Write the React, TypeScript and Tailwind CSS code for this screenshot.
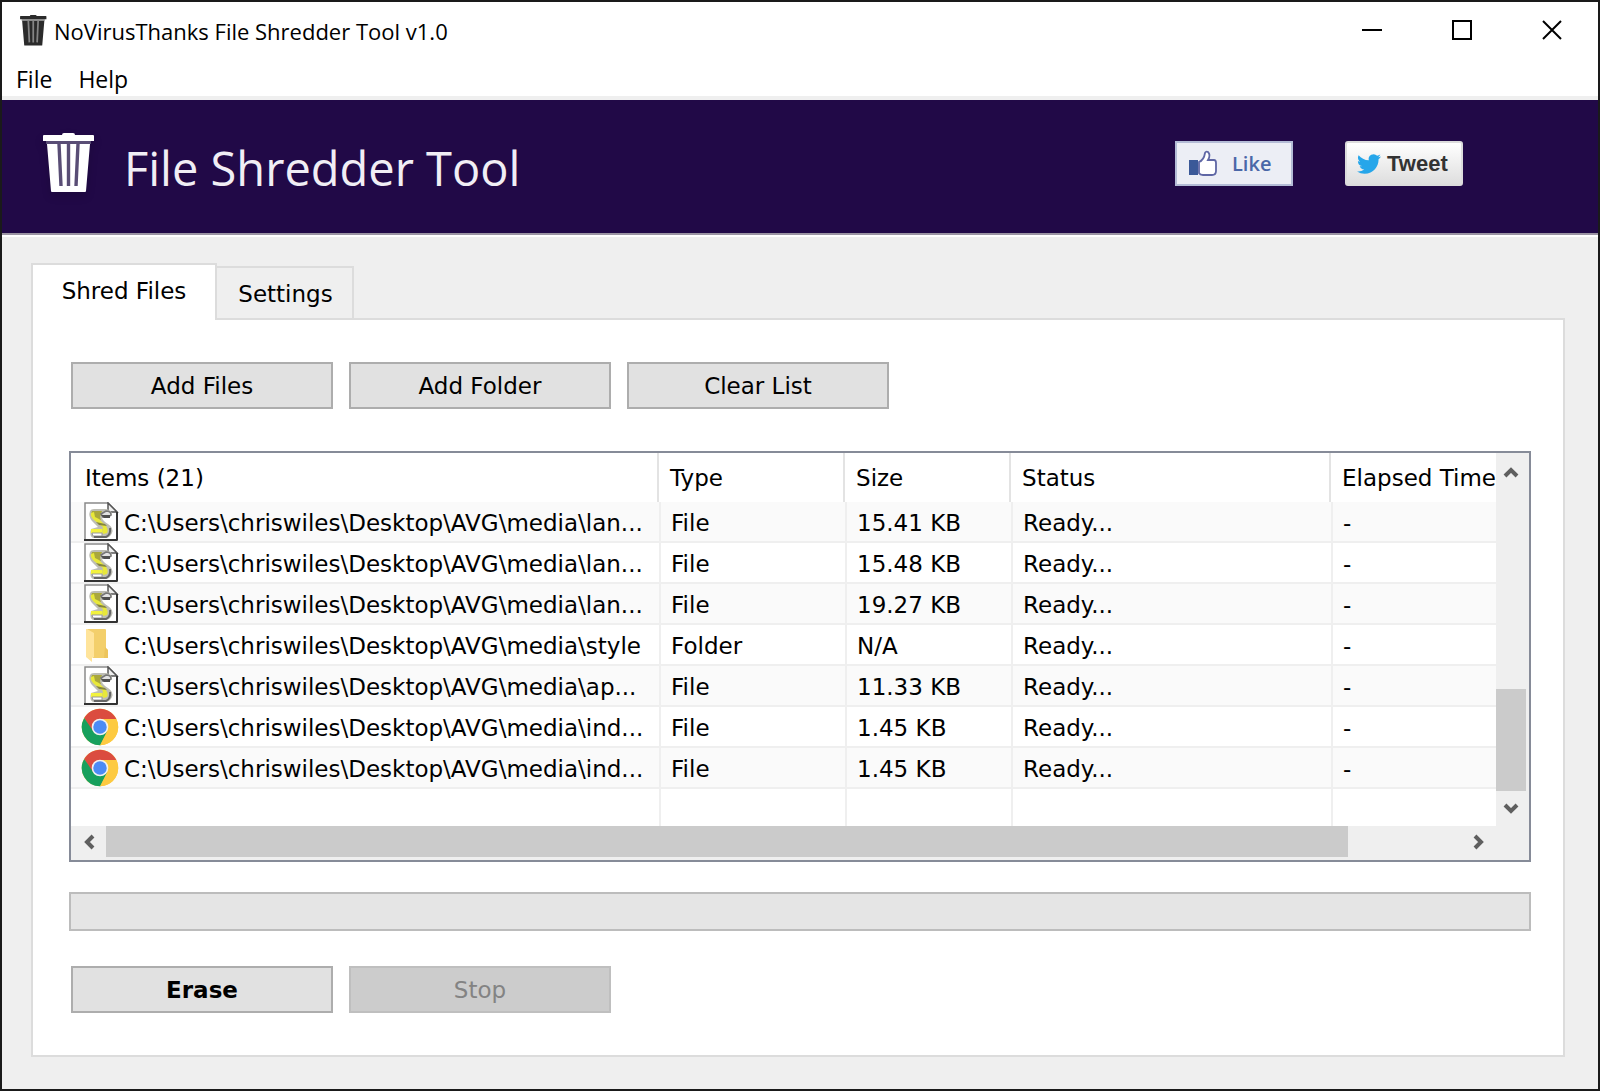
import { useState } from 'react';

const columns = ['Type', 'Size', 'Status', 'Elapsed Time'];

const items = [
  { icon: 'script', path: 'C:\\Users\\chriswiles\\Desktop\\AVG\\media\\lan...', type: 'File', size: '15.41 KB' },
  { icon: 'script', path: 'C:\\Users\\chriswiles\\Desktop\\AVG\\media\\lan...', type: 'File', size: '15.48 KB' },
  { icon: 'script', path: 'C:\\Users\\chriswiles\\Desktop\\AVG\\media\\lan...', type: 'File', size: '19.27 KB' },
  { icon: 'folder', path: 'C:\\Users\\chriswiles\\Desktop\\AVG\\media\\style', type: 'Folder', size: 'N/A' },
  { icon: 'script', path: 'C:\\Users\\chriswiles\\Desktop\\AVG\\media\\ap...', type: 'File', size: '11.33 KB' },
  { icon: 'chrome', path: 'C:\\Users\\chriswiles\\Desktop\\AVG\\media\\ind...', type: 'File', size: '1.45 KB' },
  { icon: 'chrome', path: 'C:\\Users\\chriswiles\\Desktop\\AVG\\media\\ind...', type: 'File', size: '1.45 KB' },
];

function TrashIcon({ className, fill, gap }: { className: string; fill: string; gap: string }) {
  return (
    <svg className={className} viewBox="0 0 52 60" aria-hidden="true">
      <path fill={fill} d="M19 2q0-2 2-2h9q2 0 2 2h18q1 0 1 1v5H0V3q0-1 1-1z" />
      <path fill={gap} d="M3 8h45v3H3z" />
      <path fill={fill} d="M4 11h43l-4 47q0 1-1 1H9q-1 0-1-1z" />
      <path
        fill="none"
        stroke={gap}
        strokeWidth="3.4"
        d="M16 11l2 42M25.5 11v42M35 11l-2 42"
      />
    </svg>
  );
}

function ScriptIcon() {
  return (
    <svg className="h-[39px] w-[38px]" viewBox="0 0 38 39" aria-hidden="true">
      <path fill="#fff" stroke="#8a8a8a" strokeWidth="1.5" d="M4 1h23l9 9v28H4z" />
      <path fill="#eee" stroke="#555" strokeWidth="1.5" d="M27 1v9h9z" />
      <path fill="none" stroke="#333" strokeWidth="2" d="M3 38h33.5M36 10v28" />
      {/* parchment roll */}
      <path fill="#bdbdb4" d="M9 9q1-2 4-2h12q6 1 6 6l-5 3h-5q1 3 6 6 6 4 4 9-2 5-7 5H12q-4-2-2-9l7-2-6-6q-4-5-2-10z" />
      <path fill="#a9a73c" d="M11 9h10l-2 6 1 3-7-1q-4-4-2-8z" />
      <path fill="#e8e83a" d="M10 11l3-1 1 5 4 2 6 6q4 4 2 8l-4 1-1-3 1-4-9-7q-4-4-3-7z" />
      <path fill="#e2e2e2" stroke="#777" strokeWidth="1.5" d="M20 12l5-3q5 0 5 4l-3 2h-5z" />
      <path fill="#4f4f4f" d="M20 13h9v3h-6z" />
      <path fill="#85853f" d="M15 20l9 2 2 2-8-1z" />
      <path fill="#f2f23e" d="M10 27h11v4H10z" />
      <path fill="#fff" stroke="#999" d="M11 31h10v3H12z" />
      <path fill="none" stroke="#666" strokeWidth="2" d="M13 35h12q5-2 4-9" />
    </svg>
  );
}

function FolderIcon() {
  return (
    <svg className="h-[39px] w-[38px]" viewBox="0 0 38 39" aria-hidden="true">
      <path fill="#f3cf6b" d="M6 4h18q1 0 1 1v18l2 2v8H12z" />
      <path fill="#e9be52" d="M24 22l3 3v8h-4z" opacity="0.6" />
      <path fill="#ffe49b" d="M5 4h1l7 4v24l-2 1v4l-6-5z" />
    </svg>
  );
}

function ChromeIcon() {
  return (
    <svg className="h-[38px] w-[38px]" viewBox="0 0 48 48" aria-hidden="true">
      <circle cx="24" cy="24" r="23" fill="#fdca41" />
      <path fill="#db4c3f" d="M4.1 12.5A23 23 0 0 1 43.9 12.5L44.7 14H24L14 30z" />
      <path fill="#17a05d" d="M4.1 12.5A23 23 0 0 0 24.5 47L33.5 29.5 24 34 15.3 29z" />
      <path fill="#fdca41" d="M44.7 14A23 23 0 0 1 24 47L33 29.5Q36 22 30 14z" />
      <circle cx="24" cy="24" r="10.5" fill="#f1f1f1" />
      <circle cx="24" cy="24" r="8.5" fill="#4c8bf5" />
    </svg>
  );
}

function ItemIcon({ name }: { name: string }) {
  if (name === 'folder') return <FolderIcon />;
  if (name === 'chrome') return <ChromeIcon />;
  return <ScriptIcon />;
}

function Chevron({ d }: { d: string }) {
  return (
    <svg className="h-4 w-4" viewBox="0 0 16 16" aria-hidden="true">
      <path d={d} fill="none" stroke="#5f5f5f" strokeWidth="4" />
    </svg>
  );
}

export default function App() {
  const [tab, setTab] = useState('shred');
  const button = 'h-[47px] w-[262px] border-2 border-[#adadad] bg-[#e1e1e1] text-black';
  const cell = 'border-b-2 border-l-2 border-[#efefef] pb-0 pl-[10px] pt-[2px]';

  return (
    <div className="flex min-h-screen flex-col border-2 border-[#1a1a1a] bg-[#efefef] font-['DejaVu_Sans',Verdana,sans-serif] text-[23px] leading-[28px] text-black">
      {/* Title bar */}
      <header className="bg-white font-['Open_Sans','Noto_Sans',sans-serif]">
        <div className="flex h-[56px] items-center justify-between">
          <div className="flex items-center gap-[7px] pl-[18px]">
            <TrashIcon className="h-[31px] w-[27px]" fill="#2b2b2b" gap="#858585" />
            <h1 className="pt-[2px] text-[22px]">NoVirusThanks File Shredder Tool v1.0</h1>
          </div>
          <div className="flex pr-px">
            <button aria-label="Minimize" className="flex h-[54px] w-[90px] items-center justify-center">
              <svg className="h-5 w-5" viewBox="0 0 20 20"><path d="M0 10h20" stroke="#000" strokeWidth="2" /></svg>
            </button>
            <button aria-label="Maximize" className="flex h-[54px] w-[90px] items-center justify-center">
              <svg className="h-5 w-5" viewBox="0 0 20 20"><path d="M1 1h18v18H1z" fill="none" stroke="#000" strokeWidth="2" /></svg>
            </button>
            <button aria-label="Close" className="flex h-[54px] w-[90px] items-center justify-center">
              <svg className="h-5 w-5" viewBox="0 0 20 20"><path d="M1 1l18 18M19 1L1 19" stroke="#000" strokeWidth="2" /></svg>
            </button>
          </div>
        </div>
        <nav className="flex h-[38px] items-end gap-[26px] pb-[3px] pl-[14px]">
          <button>File</button>
          <button>Help</button>
        </nav>
      </header>

      {/* Banner */}
      <section className="flex h-[137px] items-start justify-between border-t-4 border-[#efefef] bg-[#210947]">
        <div className="flex items-start pl-[41px] pt-[33px] text-white">
          <TrashIcon className="h-[60px] w-[52px] drop-shadow-lg" fill="#ffffff" gap="#594d75" />
          <h2 className="pl-[29px] pt-[7px] font-['Open_Sans',sans-serif] text-[47px] leading-[56px] text-[#f1eef5]">File Shredder Tool</h2>
        </div>
        <div className="flex gap-[52px] pr-[135px] pt-[41px]">
          <a href="#like" className="flex h-[45px] w-[118px] items-center gap-[15px] border-2 border-[#b4bcd6] bg-[#eceef5] pl-3 font-['Open_Sans',sans-serif] text-[20px] font-semibold text-[#4a67a8]">
            <svg className="h-[27px] w-[28px]" viewBox="0 0 28 27" aria-hidden="true">
              <path fill="#3b5998" d="M0 10h9v15H0z" />
              <path fill="#fff" stroke="#5f67a5" strokeWidth="1.8" d="M10 12q5-2 6-9 1-2 3-1 3 3 0 8h6q2 0 2 3v8q0 4-4 4H14q-3 0-4-2z" />
            </svg>
            Like
          </a>
          <a href="#tweet" className="flex h-[45px] w-[118px] items-center gap-[6px] rounded-[3px] border-2 border-[#dcdcdc] bg-gradient-to-b from-white to-[#dedede] pl-[10px] font-['Liberation_Sans',sans-serif] text-[22px] font-bold text-[#333]">
            <svg className="h-[24px] w-[24px]" viewBox="0 0 24 24" aria-hidden="true">
              <path fill="#26a6ea" d="M23.95 4.57a10 10 0 0 1-2.82.77 4.96 4.96 0 0 0 2.16-2.72c-.95.55-2 .96-3.13 1.18a4.92 4.92 0 0 0-8.38 4.48C7.69 8.09 4.07 6.13 1.64 3.16a4.82 4.82 0 0 0-.67 2.48c0 1.71.87 3.21 2.19 4.1a4.9 4.9 0 0 1-2.23-.62v.06a4.92 4.92 0 0 0 3.95 4.83 5 5 0 0 1-2.21.08 4.94 4.94 0 0 0 4.6 3.42A9.87 9.87 0 0 1 0 19.54a13.99 13.99 0 0 0 7.55 2.21c9.05 0 14-7.5 14-13.99 0-.21 0-.42-.02-.63a9.94 9.94 0 0 0 2.46-2.55z" />
            </svg>
            Tweet
          </a>
        </div>
      </section>
      <div className="h-1 border-t-2 border-[#9b94a3] bg-white" />

      <main className="flex flex-1 flex-col pb-8 pl-[29px] pr-[33px] pt-[26px]">
        {/* Tabs */}
        <div role="tablist" className="relative -mb-[2px] flex items-end">
          <button
            role="tab"
            aria-selected={tab === 'shred'}
            onClick={() => setTab('shred')}
            className="h-[57px] w-[186px] border-2 border-b-0 border-[#dcdcdc] bg-white pb-1"
          >
            Shred Files
          </button>
          <button
            role="tab"
            aria-selected={tab === 'settings'}
            onClick={() => setTab('settings')}
            className="h-[54px] w-[137px] border-2 border-l-0 border-[#dcdcdc] pl-[2px] pt-[2px]"
          >
            Settings
          </button>
        </div>

        <section className="flex-1 border-2 border-[#dcdcdc] bg-white pb-10 pl-9 pr-8 pt-[42px]">
          <div className="flex gap-4 pl-[2px]">
            <button className={button}>Add Files</button>
            <button className={button}>Add Folder</button>
            <button className={button}>Clear List</button>
          </div>

          {/* File list */}
          <div className="mt-[42px] border-2 border-[#868b98]">
            <div className="flex">
              <table className="min-w-0 flex-1 table-fixed border-separate border-spacing-0 text-left">
                <colgroup>
                  <col />
                  <col className="w-[186px]" />
                  <col className="w-[166px]" />
                  <col className="w-[320px]" />
                  <col className="w-[163px]" />
                </colgroup>
                <thead>
                  <tr className="h-[49px]">
                    <th className="border-r-2 border-[#e3e3e3] pl-[14px] font-normal">Items (21)</th>
                    {columns.map((name) => (
                      <th key={name} className="whitespace-nowrap border-r-2 border-[#e3e3e3] py-0 pl-[11px] pr-0 font-normal last:border-r-0">{name}</th>
                    ))}
                  </tr>
                </thead>
                <tbody>
                  {items.map((item, i) => (
                    <tr key={i} className="h-[41px] odd:bg-[#fafafa]">
                      <td className="border-b-2 border-[#efefef] py-0 pl-[10px]">
                        <div className="flex h-[39px] items-center gap-[5px] whitespace-nowrap">
                          <ItemIcon name={item.icon} />
                          <span className="pt-[2px]">{item.path}</span>
                        </div>
                      </td>
                      <td className={cell}>{item.type}</td>
                      <td className={cell}>{item.size}</td>
                      <td className={cell}>Ready...</td>
                      <td className={cell}>-</td>
                    </tr>
                  ))}
                  <tr className="h-[37px]">
                    <td />
                    {columns.map((name) => (
                      <td key={name} className="border-l-2 border-[#efefef]" />
                    ))}
                  </tr>
                </tbody>
              </table>
              <div className="flex w-[33px] flex-col bg-[#efefef] pr-[3px]">
                <button aria-label="Scroll up" className="flex h-[38px] items-center justify-center">
                  <Chevron d="M2 12l6-6 6 6" />
                </button>
                <div className="flex flex-1 flex-col justify-end">
                  <div className="h-[102px] bg-[#cbcbcb]" />
                </div>
                <button aria-label="Scroll down" className="flex h-[35px] items-center justify-center">
                  <Chevron d="M2 4l6 6 6-6" />
                </button>
              </div>
            </div>
            <div className="flex h-[34px] bg-[#efefef] pb-[3px] pr-[33px]">
              <button aria-label="Scroll left" className="flex w-[35px] items-center justify-center">
                <Chevron d="M12 2L6 8l6 6" />
              </button>
              <div className="flex-1">
                <div className="h-full w-11/12 bg-[#cbcbcb]" />
              </div>
              <button aria-label="Scroll right" className="flex w-[35px] items-center justify-center">
                <Chevron d="M4 2l6 6-6 6" />
              </button>
            </div>
          </div>

          <div role="progressbar" aria-label="Progress" aria-valuenow={0} className="mt-[30px] h-[39px] border-2 border-[#bcbcbc] bg-[#e5e5e5]" />

          <div className="mt-[35px] flex gap-4 pl-[2px]">
            <button className="h-[47px] w-[262px] border-2 border-[#adadad] bg-[#e1e1e1] font-bold text-black">Erase</button>
            <button disabled className="h-[47px] w-[262px] border-2 border-[#bfbfbf] bg-[#cccccc] text-[#838383]">Stop</button>
          </div>
        </section>
      </main>
    </div>
  );
}
